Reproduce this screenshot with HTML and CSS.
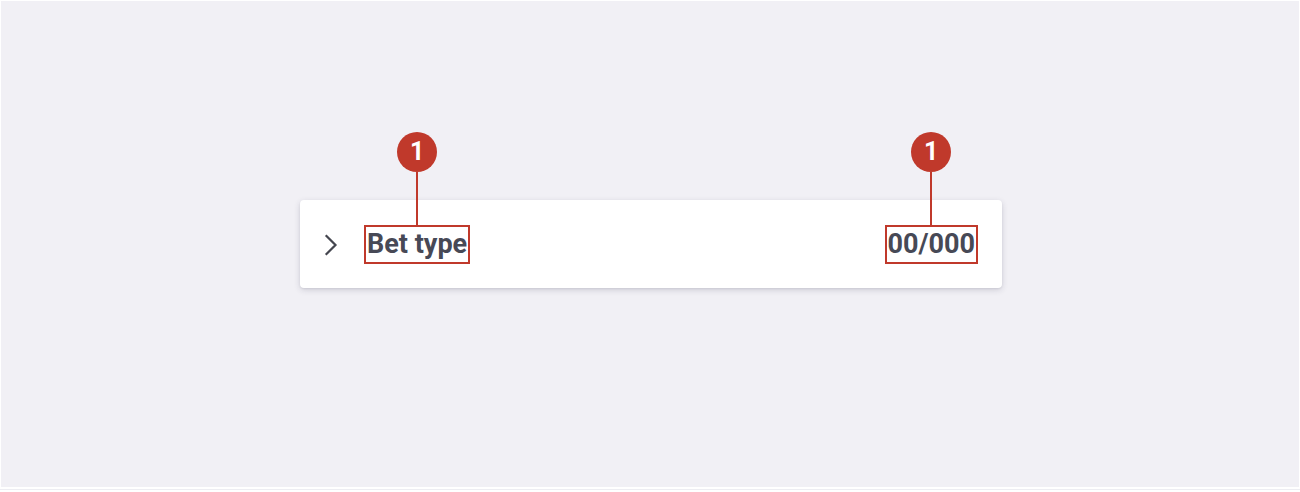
FILE: index.html
```html
<!DOCTYPE html>
<html lang="en">
<head>
<meta charset="utf-8">
<title>Bet type</title>
<link rel="stylesheet" href="styles.css">
</head>
<body>
<div class="stage">
  <div class="card">
    <svg class="chevron" width="14" height="22" viewBox="0 0 14 22" aria-hidden="true">
      <path d="M2.5 2 L11.5 11 L2.5 20" fill="none" stroke="#44464f" stroke-width="2.2" stroke-linecap="square" stroke-linejoin="miter"/>
    </svg>
    <span class="label annotated">Bet type<span class="marker"><span class="badge">1</span><span class="stem"></span></span></span>
    <span class="count annotated">00/000<span class="marker"><span class="badge">1</span><span class="stem"></span></span></span>
  </div>
</div>
<div class="footer-line"></div>
</body>
</html>
```
FILE: styles.css
```css
html, body {
  margin: 0;
  padding: 0;
  background: #ffffff;
}
body {
  width: 1300px;
  height: 492px;
  overflow: hidden;
  font-family: Roboto, "Liberation Sans", sans-serif;
}
.stage {
  box-sizing: border-box;
  margin: 1px 1px 0 1px;
  height: 486px;
  background: #f1f0f5;
  display: flex;
  justify-content: center;
  padding-top: 199px;
}
.card {
  box-sizing: border-box;
  width: 702px;
  height: 88px;
  margin-left: 2px;
  background: #ffffff;
  border-radius: 4px;
  box-shadow: 0 2px 6px rgba(40, 40, 70, 0.16), 0 1px 2px rgba(40, 40, 70, 0.08);
  display: flex;
  align-items: center;
  padding: 0 26px 0 24px;
}
.chevron {
  flex: none;
  margin-right: 28px;
  margin-top: 1px;
}
.label, .count {
  display: block;
  font-size: 27px;
  font-weight: 700;
  color: #474956;
  line-height: 35px;
  height: 35px;
  letter-spacing: 0;
}
.count {
  margin-left: auto;
}
.annotated {
  position: relative;
  outline: 2px solid #c0392b;
  outline-offset: 0px;
  padding: 0 1px;
}
.marker {
  position: absolute;
  left: 50%;
  bottom: 100%;
  width: 40px;
  margin-left: -20px;
  display: flex;
  flex-direction: column;
  align-items: center;
}
.badge {
  width: 40px;
  height: 40px;
  border-radius: 50%;
  background: #c0392b;
  color: #ffffff;
  font-size: 25px;
  font-weight: 700;
  line-height: 40px;
  text-align: center;
  letter-spacing: 0;
}
.stem {
  width: 2px;
  height: 55px;
  background: #c0392b;
}
.footer-line {
  margin: 2px 0 0 0;
  height: 1px;
  background: #ededf2;
}
```
